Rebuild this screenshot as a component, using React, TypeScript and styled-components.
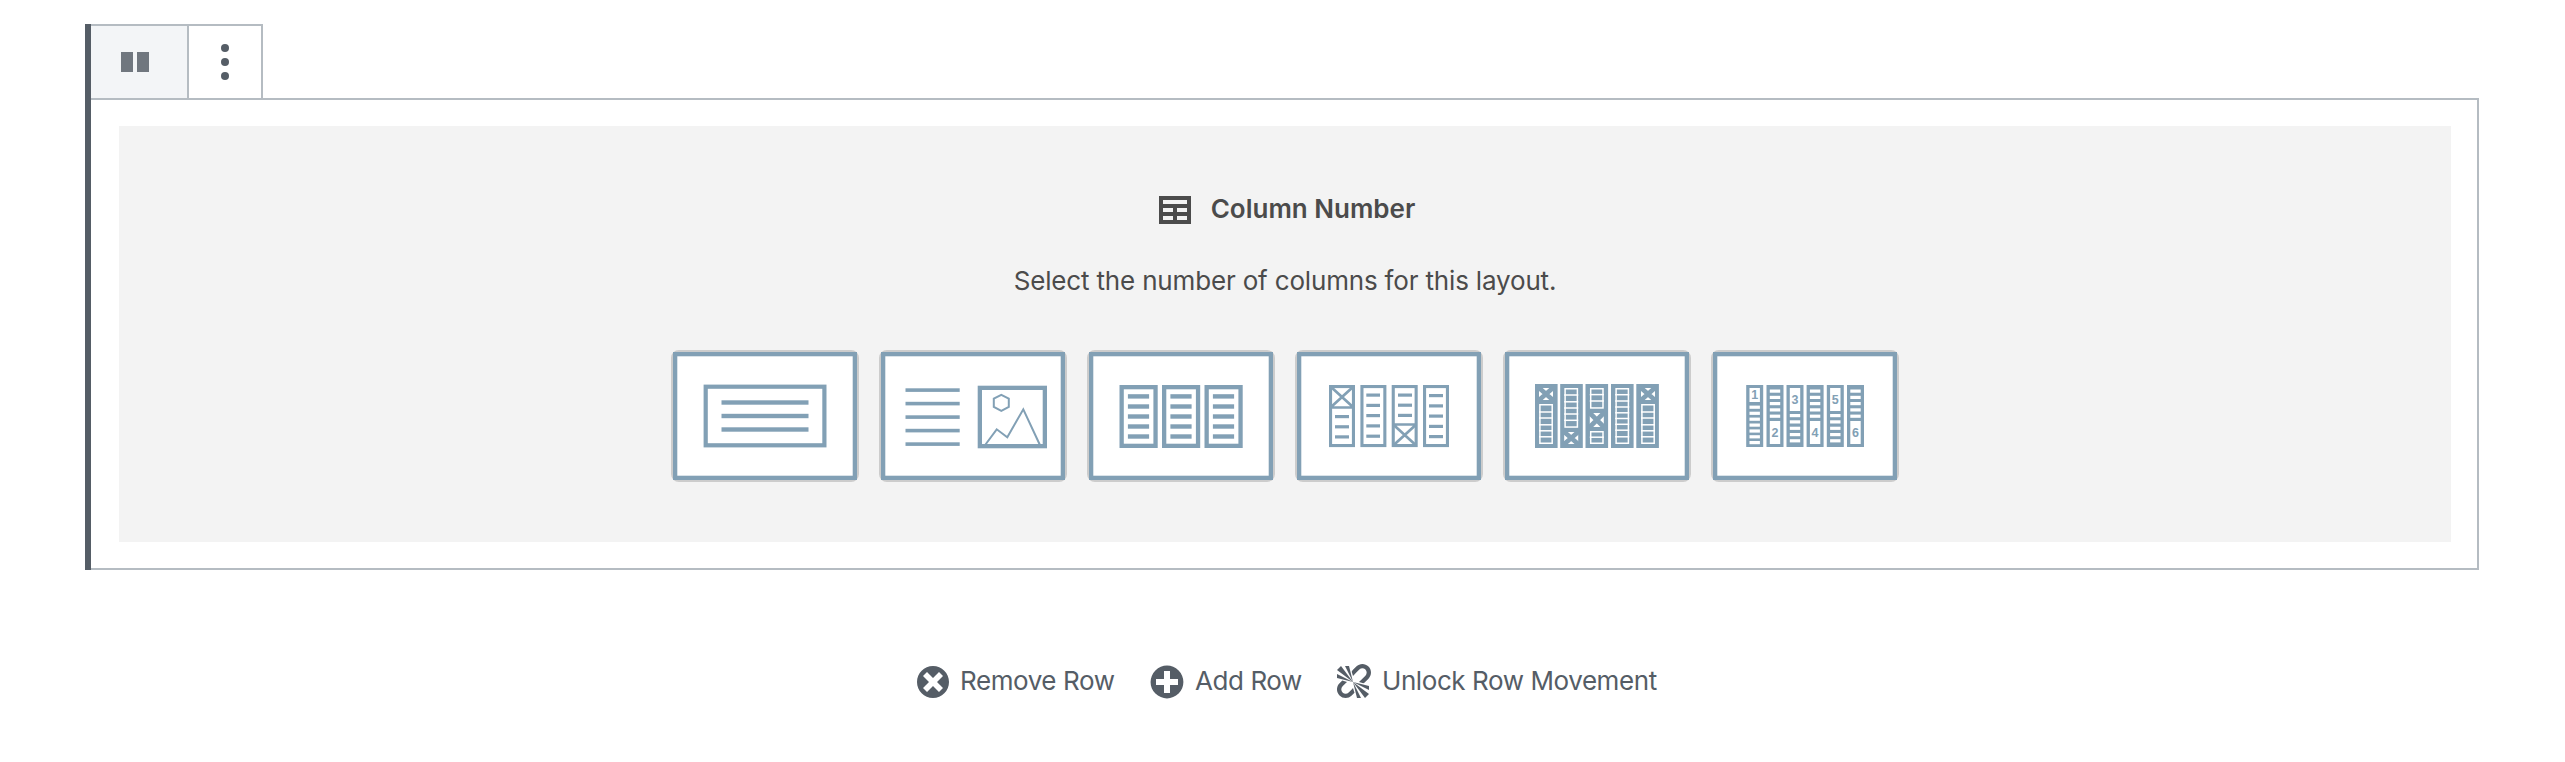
import React from 'react';
import styled, { createGlobalStyle } from 'styled-components';

const BLUE = '#82a0b5';
const SLATE = '#555d66';
const LINE = '#b5bcc2';

const GlobalStyle = createGlobalStyle`
  *, *::before, *::after { box-sizing: border-box; }
  body { margin: 0; background: #fff; font-family: Inter, 'Noto Sans', sans-serif; }
  svg { display: block; flex: none; }
`;

const Page = styled.main`
  width: 2565px;
  height: 762px;
  padding: 24px 86px 0 85px;
  overflow: hidden;
`;

const Block = styled.section`
  height: 546px;
  border-left: 6px solid ${SLATE};
`;

const Toolbar = styled.div`
  display: flex;
  width: 172px;
  height: 74px;
  border-top: 2px solid ${LINE};
`;

const ToolButton = styled.button<{ $width: number; $active?: boolean }>`
  display: flex;
  align-items: center;
  width: ${(p) => p.$width}px;
  height: 72px;
  padding: 0;
  border: 0;
  border-right: 2px solid ${LINE};
  background: ${(p) => (p.$active ? '#f3f5f7' : '#fff')};
`;

const BlockBody = styled.div`
  height: 472px;
  padding: 26px 26px 26px 28px;
  border: 2px solid ${LINE};
  border-left: 0;
`;

const Panel = styled.div`
  display: flex;
  flex-direction: column;
  align-items: center;
  height: 416px;
  padding-top: 64px;
  background: #f3f3f3;
  color: #4b4b4b;
`;

const Heading = styled.h2`
  display: flex;
  align-items: flex-start;
  gap: 16px;
  height: 40px;
  margin: 0;
  font-size: 26px;
  font-weight: 600;
  line-height: 38px;
  white-space: nowrap;
`;

const Hint = styled.p`
  height: 40px;
  margin: 31px 0 49px;
  font-size: 26px;
  line-height: 40px;
  letter-spacing: -0.17px;
  white-space: nowrap;
`;

const Layouts = styled.div`
  display: flex;
  gap: 20px;
`;

const LayoutButton = styled.button`
  width: 188px;
  height: 132px;
  padding: 0;
  border: 2px solid #ccc;
  border-radius: 8px;
  background: #ccc;
`;

const Actions = styled.nav`
  display: flex;
  margin-top: 92px;
  padding-left: 828px;
  color: ${SLATE};
`;

const Action = styled.button<{ $width: number; $gap: number }>`
  display: flex;
  align-items: flex-start;
  gap: ${(p) => p.$gap}px;
  width: ${(p) => p.$width}px;
  height: 40px;
  padding: 0;
  border: 0;
  background: none;
  color: inherit;
  font: 400 26px/38px Inter, 'Noto Sans', sans-serif;
  letter-spacing: -0.42px;
  white-space: nowrap;
`;

const Dashicon = ({ d }: { d: string }) => (
  <svg width="40" height="40" viewBox="0 0 20 20" fill="currentColor">
    <path d={d} />
  </svg>
);

const icons = {
  table: 'M18 17V3H2v14h16zM16 7H4V5h12v2zm-7 4H4V9h5v2zm7 0h-5V9h5v2zm-7 4H4v-2h5v2zm7 0h-5v-2h5v2z',
  dismiss:
    'M10 2c4.42 0 8 3.58 8 8s-3.58 8-8 8-8-3.58-8-8 3.58-8 8-8zm5 11l-3-3 3-3-2-2-3 3-3-3-2 2 3 3-3 3 2 2 3-3 3 3z',
  plus: 'M15.8 4.2c3.2 3.21 3.2 8.39 0 11.6-3.21 3.2-8.39 3.2-11.6 0C1 12.59 1 7.41 4.2 4.2 7.41 1 12.59 1 15.8 4.2zm-4.3 11.3v-4h4v-3h-4v-4h-3v4h-4v3h4v4h3z',
  unlink:
    'M17.74 2.26c1.68 1.69 1.68 4.41 0 6.1l-1.53 1.52c-.32.33-.69.58-1.08.77L13 10l1.69-1.64.76-.77.76-.76c.84-.84.84-2.2 0-3.04-.84-.85-2.2-.85-3.04 0l-.77.76-.76.76L10 7l-.65-2.14c.19-.38.44-.75.77-1.07l1.52-1.53c1.69-1.68 4.42-1.68 6.1 0zM2 4l8 6-6-8zm4-2l4 8-2-8H6zM2 6l8 4-8-2V6zm7.36 7.69L10 13l.74 2.35-1.38 1.39c-1.69 1.68-4.41 1.68-6.1 0-1.68-1.68-1.68-4.42 0-6.1l1.39-1.38L7 10l-.69.64-1.52 1.53c-.85.84-.85 2.2 0 3.04.84.85 2.2.85 3.04 0zM18 16l-8-6 6 8zm-4 2l-4-8 2 8h2zm4-4l-8-4 8 2v2z',
};

/* Outlined rectangle given by its outer edges. */
const Frame = ({ x1, y1, x2, y2, w }: { x1: number; y1: number; x2: number; y2: number; w: number }) => (
  <rect x={x1 + w / 2} y={y1 + w / 2} width={x2 - x1 - w} height={y2 - y1 - w} fill="none" stroke={BLUE} strokeWidth={w} />
);

/* Horizontal bars of equal size at the listed heights. */
const Bars = ({ x, width, height, ys, fill = BLUE }: { x: number; width: number; height: number; ys: number[]; fill?: string }) => (
  <>
    {ys.map((y) => (
      <rect key={y} x={x} y={y} width={width} height={height} fill={fill} />
    ))}
  </>
);

const Thumb = ({ children }: { children: React.ReactNode }) => (
  <svg width="184" height="128" viewBox="0 0 184 128">
    <rect width="184" height="128" fill="#fff" />
    <Frame x1={0} y1={0} x2={184} y2={128} w={4.3} />
    {children}
  </svg>
);

const OneColumn = () => (
  <Thumb>
    <Frame x1={30.6} y1={32.6} x2={153.5} y2={95.4} w={4.2} />
    <Bars x={48.5} width={87} height={4.4} ys={[48.3, 61.8, 75.3]} />
  </Thumb>
);

const TwoColumns = () => (
  <Thumb>
    <Bars x={24.5} width={54.2} height={3.6} ys={[36.3, 49.8, 63.3, 76.8, 90.3]} />
    <Frame x1={96.7} y1={33.7} x2={166} y2={96.3} w={4.3} />
    <g fill="none" stroke={BLUE} strokeWidth="2">
      <path d="M120.3 42.8l7.5 3.9v8.2l-7.5 4-7.5-4v-8.2z" />
      <path d="M104.5 92.5l11.2-15.2 10.6 8 16-28 16.4 35.2" />
    </g>
  </Thumb>
);

const ThreeColumns = () => (
  <Thumb>
    {[30.5, 73, 115.5].map((x) => (
      <g key={x}>
        <Frame x1={x} y1={33} x2={x + 38.2} y2={96} w={4.3} />
        <Bars x={x + 8.4} width={21.2} height={4.4} ys={[42.2, 52.3, 62.3, 72.3, 82.3]} />
      </g>
    ))}
  </Thumb>
);

const FourColumns = () => (
  <Thumb>
    {[32, 63.4, 94.7, 126].map((x) => (
      <Frame key={x} x1={x} y1={33} x2={x + 26} y2={95.1} w={3.1} />
    ))}
    <path
      d="M33.5 55.5h23M33.5 34.5l23 21M56.5 34.5l-23 21M96.2 72.5h23M96.2 72.5l23 21M119.2 72.5l-23 21"
      fill="none"
      stroke={BLUE}
      strokeWidth="2.7"
    />
    <Bars x={38} width={14} height={3.2} ys={[63, 73.2, 83.3]} />
    <Bars x={69.3} width={13.7} height={3.2} ys={[41.5, 51.8, 62, 72.3, 82.6]} />
    <Bars x={101} width={14} height={3.2} ys={[41.5, 51.6, 61.8]} />
    <Bars x={132} width={14} height={3.2} ys={[42, 52.3, 62.5, 72.8, 83]} />
  </Thumb>
);

const Ladder = ({ x, y1, y2, rungs }: { x: number; y1: number; y2: number; rungs: number[] }) => (
  <g stroke="#fff" strokeWidth="1.5" fill="none">
    <rect x={x + 0.9} y={y1 + 0.75} width={12.3} height={y2 - y1 - 1.5} />
    {rungs.map((y) => (
      <path key={y} d={`M${x} ${y}h14`} />
    ))}
  </g>
);

const Crossed = ({ x, y, height }: { x: number; y: number; height: number }) => (
  <g>
    <rect x={x} y={y} width="14" height={height} fill="#fff" />
    <path d={`M${x - 1} ${y - 1}l16 ${height + 2}M${x + 15} ${y - 1}l-16 ${height + 2}`} stroke={BLUE} strokeWidth="4.7" fill="none" />
  </g>
);

const FiveColumns = () => (
  <Thumb>
    {[30, 55.2, 80.5, 106, 131.3].map((x) => (
      <rect key={x} x={x} y="32" width="22.6" height="64" fill={BLUE} />
    ))}
    <Crossed x={34} y={36} height={12} />
    <Ladder x={34} y1={52} y2={92} rungs={[60, 66, 72.8, 78.8, 84.8]} />
    <Ladder x={59.2} y1={36} y2={75.8} rungs={[43, 49.8, 56, 62, 68.3]} />
    <Crossed x={59.2} y={80} height={12} />
    <Ladder x={84.8} y1={36} y2={56.7} rungs={[42.6, 49]} />
    <Crossed x={84.8} y={61} height={14} />
    <Ladder x={84.8} y1={79} y2={92} rungs={[85.2]} />
    <Ladder x={110.2} y1={36} y2={92} rungs={[42.7, 49, 55, 60.8, 66.5, 72.3, 78.2, 84.8]} />
    <Crossed x={136} y={36} height={12} />
    <Ladder x={136} y1={52} y2={92} rungs={[60, 66, 72.8, 78.8, 84.8]} />
  </Thumb>
);

const numbered = [
  { x: 33.2, top: 36, bottom: 50, base: 47.3, slots: [53.6, 59.7, 65.6, 71.5, 77.4, 83.2, 89] },
  { x: 53.5, top: 69, bottom: 92, base: 85, slots: [37.5, 43.8, 50, 56.3, 62.6] },
  { x: 73.5, top: 36, bottom: 59, base: 52, slots: [62, 68.3, 74.7, 81, 87.2] },
  { x: 93.6, top: 69, bottom: 92, base: 85, slots: [37.5, 43.8, 50, 56.3, 62.6] },
  { x: 113.8, top: 36, bottom: 59, base: 52, slots: [62, 68.3, 74.7, 81, 87.2] },
  { x: 134, top: 69, bottom: 92, base: 85, slots: [37.5, 43.8, 50, 56.3, 62.6] },
];

const SixColumns = () => (
  <Thumb>
    {numbered.map((c, i) => (
      <g key={c.x}>
        <rect x={c.x} y="33" width="17" height="62" fill={BLUE} />
        <rect x={c.x + 3.3} y={c.top} width="10.4" height={c.bottom - c.top} fill="#fff" />
        <Bars x={c.x + 3.3} width={10.4} height={3.2} ys={c.slots} fill="#fff" />
        <text
          x={c.x + 8.5}
          y={c.base}
          textAnchor="middle"
          fontFamily="'Liberation Sans', Arial, sans-serif"
          fontSize="12.5"
          fontWeight="700"
          fill={BLUE}
        >
          {i + 1}
        </text>
      </g>
    ))}
  </Thumb>
);

const layouts = [OneColumn, TwoColumns, ThreeColumns, FourColumns, FiveColumns, SixColumns];

export default function App() {
  return (
    <>
      <GlobalStyle />
      <Page>
        <Block>
          <Toolbar>
            <ToolButton $width={98} $active aria-label="Columns">
              <svg width="96" height="72">
                <path d="M30 26h12v20H30zM46 26h12v20H46z" fill="#70777f" />
              </svg>
            </ToolButton>
            <ToolButton $width={74} aria-label="More options">
              <svg width="72" height="72" fill={SLATE}>
                <circle cx="36" cy="22" r="4" />
                <circle cx="36" cy="36" r="4" />
                <circle cx="36" cy="50" r="4" />
              </svg>
            </ToolButton>
          </Toolbar>
          <BlockBody>
            <Panel>
              <Heading>
                <Dashicon d={icons.table} />
                Column Number
              </Heading>
              <Hint>Select the number of columns for this layout.</Hint>
              <Layouts>
                {layouts.map((Layout, i) => (
                  <LayoutButton key={i}>
                    <Layout />
                  </LayoutButton>
                ))}
              </Layouts>
            </Panel>
          </BlockBody>
        </Block>
        <Actions>
          <Action $width={234} $gap={7}>
            <Dashicon d={icons.dismiss} />
            Remove Row
          </Action>
          <Action $width={186} $gap={8}>
            <Dashicon d={icons.plus} />
            Add Row
          </Action>
          <Action $width={340} $gap={9}>
            <Dashicon d={icons.unlink} />
            Unlock Row Movement
          </Action>
        </Actions>
      </Page>
    </>
  );
}
